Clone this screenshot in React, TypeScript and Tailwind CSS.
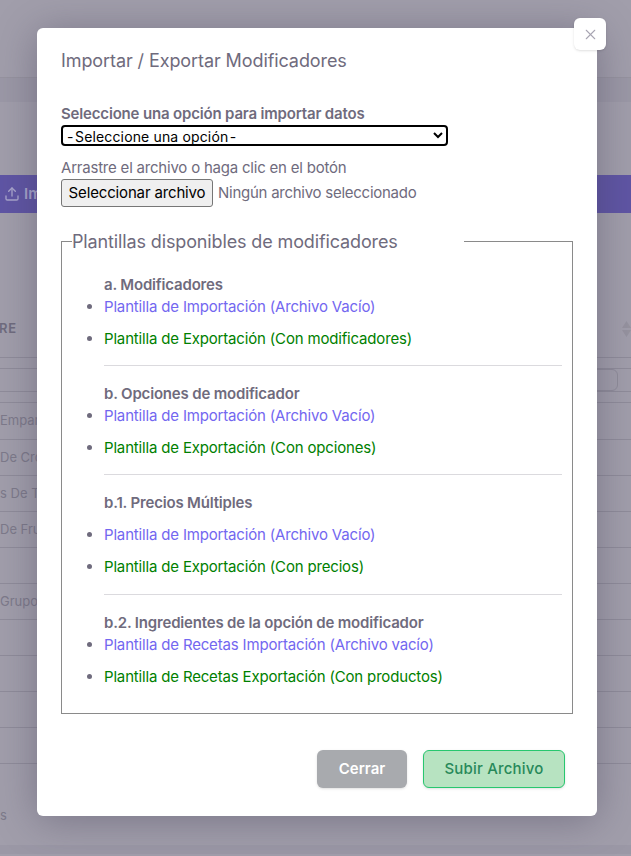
import React from "react";
import { Upload, X } from "lucide-react";

const rows = ["De Cro", "s De T", "De Fru", "", "Grupo", "", "", "", ""];

const sections = [
    {
        title: "a. Modificadores",
        gap: false,
        importar: "Plantilla de Importación (Archivo Vacío)",
        exportar: "Plantilla de Exportación (Con modificadores)",
    },
    {
        title: "b. Opciones de modificador",
        gap: false,
        importar: "Plantilla de Importación (Archivo Vacío)",
        exportar: "Plantilla de Exportación (Con opciones)",
    },
    {
        title: "b.1. Precios Múltiples",
        gap: true,
        importar: "Plantilla de Importación (Archivo Vacío)",
        exportar: "Plantilla de Exportación (Con precios)",
    },
    {
        title: "b.2. Ingredientes de la opción de modificador",
        gap: false,
        importar: "Plantilla de Recetas Importación (Archivo vacío)",
        exportar: "Plantilla de Recetas Exportación (Con productos)",
    },
];

function Background() {
    return (
        <div className="h-[856px] overflow-hidden bg-[#a19eab] text-[#7d7a8a]">
            <div className="h-[78px] border-b border-[#96939f]" />
            <div className="h-[24px] bg-[#9b98a6]" />
            <div className="h-[73px]" />
            <div className="flex h-[38px] items-center gap-1 bg-[#5f55a4] pl-1 text-[15px] font-semibold text-[#a9a5cc]">
                <Upload size={16} />
                <span>Im</span>
            </div>
            <div className="flex h-[144px] items-end justify-between pb-[19px]">
                <span className="-ml-px text-[13px] font-semibold tracking-wider text-[#6f6c7e]">RE</span>
                <svg width="9" height="16" viewBox="0 0 9 16" className="mb-px fill-[#96939f]">
                    <path d="M4.5 0 9 7H0ZM0 9h9l-4.500 7Z" />
                </svg>
            </div>
            <div className="h-[11px] border-t border-[#8f8c9a]" />
            <div className="flex h-[23px] justify-end border-t border-[#8f8c9a]">
                <div className="mr-[13px] w-[120px] rounded-md border border-[#8f8c9a]" />
            </div>
            <div className="h-[11px] border-t border-[#8f8c9a]" />
            <div className="flex h-[37px] items-center border-t border-[#8f8c9a] text-[13px]">Empar</div>
            {rows.map((text, i) => (
                <div key={i} className="flex h-[36px] items-center border-t border-[#8f8c9a] text-[13px]">
                    {text}
                </div>
            ))}
            <div className="h-[82px] border-t border-[#8f8c9a]">
                <div className="mt-[42px] text-[13px] leading-[18px]">s</div>
            </div>
            <div className="h-[9px] bg-[#9b98a6]" />
        </div>
    );
}

function Section({ s, last }: { s: (typeof sections)[number]; last: boolean }) {
    return (
        <div>
            <div className="pl-[32px] text-[15px] font-semibold leading-[22px] tracking-[-0.18px] text-[#6f6b7d]">{s.title}</div>
            <ul className={`list-disc pl-[32px] text-[15px] leading-[22px] tracking-[-0.17px] marker:text-[#6f6b7d] ${s.gap ? "mt-[10px]" : ""}`}>
                <li className="text-[#7367f0]">
                    <span>{s.importar}</span>
                </li>
                <li className="mt-[10px] text-[#008000]">
                    <span>{s.exportar}</span>
                </li>
            </ul>
            {!last && <hr className={`mb-[17px] ml-[32px] border-[#dbdade] ${s.gap ? "mt-[16px]" : "mt-[15px]"}`} />}
        </div>
    );
}

export default function App() {
    return (
        <div className="relative h-[856px] overflow-hidden font-['Inter',sans-serif]">
            <Background />
            <div className="absolute left-[37px] top-[28px] h-[788px] w-[560px] rounded-md bg-white px-6 pt-[20px] text-[15px] text-[#6f6b7d] shadow-[0_4px_40px_rgba(60,55,80,0.4)]">
                <button className="absolute -right-[9px] -top-[10px] flex h-8 w-8 items-center justify-center rounded-md bg-white text-[#a8a5b2] shadow-sm">
                    <X size={17} strokeWidth={1.5} />
                </button>
                <h5 className="text-lg leading-[26px] tracking-[-0.09px]">Importar / Exportar Modificadores</h5>
                <label className="mt-[29px] block font-semibold leading-[22px] tracking-[-0.17px]">Seleccione una opción para importar datos</label>
                <select className="block h-[21px] w-[387px] rounded-[4px] border-2 border-black text-[14px] leading-none tracking-[0.15px] text-black">
                    <option>-{"\u200A"}Seleccione una opción{"\u200A"}-</option>
                </select>
                <p className="mt-[11px] leading-[22px] tracking-[-0.21px]">Arrastre el archivo o haga clic en el botón</p>
                <div className="flex items-center gap-[5px]">
                    <button className="h-[28px] w-[152px] rounded-[3px] border border-[#767676] bg-[#efefef] tracking-[-0.15px] text-black">
                        Seleccionar archivo
                    </button>
                    <span className="tracking-[-0.26px]">Ningún archivo seleccionado</span>
                </div>
                <fieldset className="mt-[20px] h-[487px] w-[512px] border border-[#8a8a8a] px-[10px]">
                    <legend className="w-[392px] pt-[2px] text-lg leading-[26px] tracking-[-0.13px]">Plantillas disponibles de modificadores</legend>
                    <div className="mt-[19px]">
                        {sections.map((s, i) => (
                            <Section key={s.title} s={s} last={i === sections.length - 1} />
                        ))}
                    </div>
                </fieldset>
                <div className="mt-[36px] flex justify-end gap-4 pr-2">
                    <button className="h-[38px] w-[90px] rounded-md bg-[#a8aaae] font-semibold text-white shadow-sm">Cerrar</button>
                    <button className="h-[38px] w-[142px] rounded-md border border-[#28c76f] bg-[#b7e3c1] font-medium tracking-[0.2px] text-[#28895a] shadow-sm">
                        Subir Archivo
                    </button>
                </div>
            </div>
        </div>
    );
}
